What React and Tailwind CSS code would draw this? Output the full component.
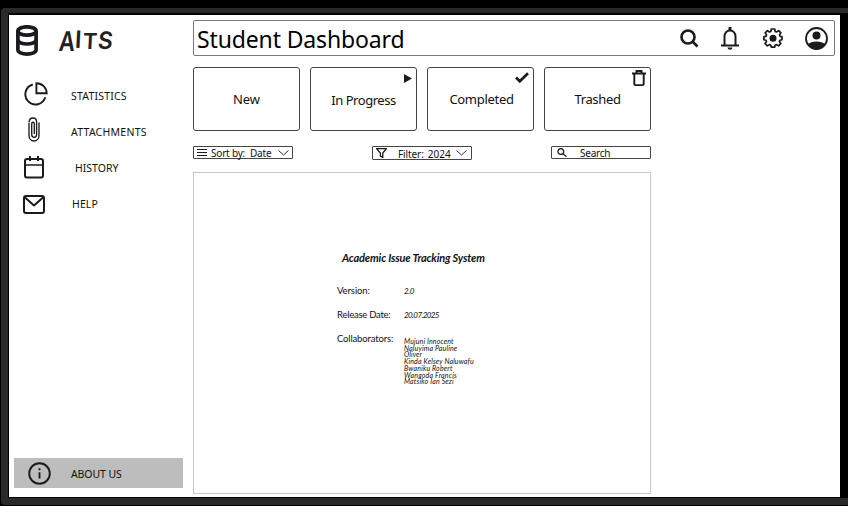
import React from "react";

const ui = "font-['Noto_Sans','Open_Sans',sans-serif]";
const script = "font-['Lato',sans-serif] italic";

function Icon({ className, box = "0 0 24 24", children, sw = 2 }) {
  return (
    <svg
      className={`block shrink-0 ${className}`}
      viewBox={box}
      fill="none"
      stroke="#1b1b1f"
      strokeWidth={sw}
      strokeLinejoin="round"
      preserveAspectRatio="none"
    >
      {children}
    </svg>
  );
}

const Database = () => (
  <Icon className="h-[31px] w-[22px]" box="0 0 22 31" sw={3.7}>
    <ellipse cx="11" cy="6" rx="9.1" ry="4.200" />
    <path d="M1.900 6v18.800c0 2.500 4 4.300 9.100 4.300s9.100-1.800 9.100-4.300V6" />
    <path d="M1.900 15.500c1.600 2.500 5 3.500 9.100 3.500s7.500-1 9.100-3.500" />
  </Icon>
);

const Pie = () => (
  <Icon className="h-[24px] w-[24px]" box="0 0 24 24" sw={1.9}>
    <path d="M8.800 2.500A10.200 10.200 0 1 0 21.300 15.300" />
    <path d="M12.400 1.200V11.300H22.700C22.700 5.600 18 1.200 12.400 1.200Z" strokeLinejoin="miter" />
  </Icon>
);

const Clip = () => (
  <Icon className="h-[25px] w-[12px]" box="0 0 12 25" sw={1.35}>
    <path d="M1 6v12.500c0 3 2 5.500 5 5.500s5-2.500 5-5.500V5.500M8.600 18V5C8.600 2.500 7.200 1 5 1S1.100 2.800 1.100 5.500M8.600 5.500v12c0 1.800-1 2.800-2.400 2.800s-2.500-1-2.500-2.800V7c0-1.200.5-1.800 1.300-1.800s1.300.6 1.300 1.800v10" />
  </Icon>
);

const Calendar = () => (
  <Icon className="h-[24px] w-[20px]" box="0 0 20 24" sw={2}>
    <rect x="1" y="4" width="18" height="18.500" rx="2" />
    <path d="M1 10h18" strokeWidth="1.500" />
    <path d="M6 1v5M14 1v5" />
  </Icon>
);

const Mail = () => (
  <Icon className="h-[19px] w-[22px]" box="0 0 22 19" sw={2}>
    <rect x="1" y="1" width="20" height="17" rx="2" />
    <path d="m2 2.500 9 8 9-8" />
  </Icon>
);

const Info = () => (
  <Icon className="h-[23px] w-[23px]" box="0 0 23 23" sw={1.9}>
    <circle cx="11.500" cy="11.500" r="10.300" />
    <path d="M11.500 10.300v6.200M11.500 6.300v2" />
  </Icon>
);

const Magnifier = () => (
  <Icon className="h-[19px] w-[19px]" box="0 0 19 19" sw={2.6}>
    <circle cx="8" cy="8" r="6.500" />
    <path d="m12.500 12.500 5 5" />
  </Icon>
);

const Bell = () => (
  <Icon className="h-[23px] w-[18px]" box="0 0 18 23" sw={2}>
    <path d="M3.500 18.500V9.500C3.500 6 6 3.500 9 3.500s5.500 2.500 5.500 6v9M0 18.600h18" />
    <path d="M9 0v3.500" strokeWidth="3" />
    <path d="M6.500 20.500h5c-.3 1.500-1.300 2.200-2.500 2.200s-2.200-.7-2.500-2.200Z" fill="#1b1b1f" stroke="none" />
  </Icon>
);

const Gear = () => (
  <Icon className="h-[20px] w-[20px]" box="0 0 20 20" sw={1.7}>
    <path d="M8.300 1h3.400l.5 2.500 1.300.5 2.200-1.400 2.200 2.200L16.500 7l.5 1.300 2 .4v3l-2 .5-.6 1.400 1.400 2-2.300 2.300-2-1.300-1.400.6-.4 1.900H8.300l-.5-1.900-1.400-.6-2 1.300-2.300-2.300 1.400-2-.6-1.400-2-.5v-3l2.100-.4.6-1.400-1.400-2L4.400 2.600l2 1.400 1.400-.5Z" />
    <circle cx="10" cy="10.300" r="3.500" fill="#1b1b1f" stroke="none" />
  </Icon>
);

const User = () => (
  <Icon className="h-[23px] w-[23px]" box="0 0 23 23" sw={1.8}>
    <circle cx="11.500" cy="11.500" r="10.500" />
    <circle cx="11.500" cy="8.500" r="4" fill="#1b1b1f" stroke="none" />
    <path d="M2.500 17.500c2-2 5.500-3 9-3s7 1 9 3c-2 3.300-5 5-9 5s-7-1.700-9-5Z" fill="#1b1b1f" stroke="none" />
  </Icon>
);

const Chevron = () => (
  <Icon className="h-[6px] w-[11px]" box="0 0 11 6" sw={0.9}>
    <path d="m.5.5 5 4.500 5-4.500" />
  </Icon>
);

function NavItem({ icon, label, pad, textClass }) {
  return (
    <div className="flex h-9 items-center">
      <div className={`flex w-[62px] shrink-0 ${pad}`}>{icon}</div>
      <span className={`whitespace-nowrap text-[10.5px] leading-none ${textClass}`}>{label}</span>
    </div>
  );
}

function Card({ label, textClass, icon }) {
  return (
    <div className="relative flex h-16 w-[107px] items-center justify-center rounded-[3px] border border-[#444]">
      <span className={`whitespace-nowrap text-[13px] leading-none ${textClass}`}>{label}</span>
      {icon}
    </div>
  );
}

const people = [
  ["Mujuni Innocent", "tracking-[0.15px]"],
  ["Naluyima Pauline", "tracking-[0.17px]"],
  ["Oliver", "tracking-[0.1px]"],
  ["Kinda Kelsey Naluwafu", "tracking-[0.15px]"],
  ["Bwaniku Robert", "tracking-[0.17px]"],
  ["Wangoda Francis", "tracking-[0.2px]"],
  ["Matsiko Ian Sezi", "tracking-[0.18px]"],
];

export default function App() {
  return (
    <div className={`h-[506px] w-[848px] overflow-hidden bg-black pt-2 text-[#111] ${ui}`}>
      <div className="ml-px h-[497px] rounded-l-[4px] bg-[#2a2a2a] pt-[5px] pb-[7px] pl-[7px]">
        <div className="h-full bg-black pt-[2px] pr-2 pb-px pl-px">
          <div className="flex h-full bg-white">
            <aside className="flex h-full w-[184px] shrink-0 flex-col">
              <div className="flex h-[62px] items-start pt-[10px] pl-[7px]">
                <Database />
                <div className="mt-[3px] ml-[21px] flex items-start font-['Inter',sans-serif] leading-none font-semibold text-[#222]">
                  <span className="inline-block w-[16px] origin-left scale-x-[0.82] -skew-x-6 text-[27px]">A</span>
                  <span className="inline-block w-[8px] rotate-3 text-[24px]">I</span>
                  <span className="mt-[2px] inline-block w-[15px] -skew-x-3 text-[22px]">T</span>
                  <span className="mt-px inline-block w-[15px] origin-left scale-x-[0.95] -skew-x-6 text-[24px]">S</span>
                </div>
              </div>
              <nav className="flex flex-col">
                <NavItem icon={<Pie />} label="STATISTICS" pad="pl-[15px] -mt-[2px]" textClass="pt-[3px] tracking-[0.2px]" />
                <NavItem icon={<Clip />} label="ATTACHMENTS" pad="pl-[19px] -mt-[3px]" textClass="pt-[2px] tracking-[0.25px]" />
                <NavItem icon={<Calendar />} label="HISTORY" pad="pl-[15px] -mt-px" textClass="pl-[4px] pt-[2px] tracking-[0px]" />
                <NavItem icon={<Mail />} label="HELP" pad="pl-[14px] pt-[3px]" textClass="pl-[1px] pt-[2px] tracking-[0.1px]" />
              </nav>
              <div className="mt-auto mb-[9px] ml-[5px] flex h-[30px] w-[169px] items-center bg-[#bdbdbd]">
                <div className="w-[57px] shrink-0 pl-[14px]"><Info /></div>
                <span className="pt-[2px] text-[10.5px] leading-none tracking-[-0.1px]">ABOUT US</span>
              </div>
            </aside>

            <main className="flex flex-1 flex-col pt-[5px]">
              <header className="flex h-9 w-[642px] items-center rounded-[2px] border border-[#777] pl-[3px]">
                <h1 className="pt-[3px] text-[23px] leading-none tracking-[-0.14px] text-black">Student Dashboard</h1>
                <div className="ml-auto flex items-center pr-[6px]">
                  <Magnifier />
                  <div className="ml-[22px]"><Bell /></div>
                  <div className="ml-[24px]"><Gear /></div>
                  <div className="ml-[22px]"><User /></div>
                </div>
              </header>

              <section className="mt-[11px] flex gap-[10px]">
                <Card label="New" textClass="tracking-[-0.1px]" />
                <Card
                  label="In Progress"
                  textClass="pt-[2px] tracking-[-0.45px]"
                  icon={
                    <svg className="absolute top-[6px] right-[4px] h-[9px] w-2" viewBox="0 0 8 9">
                      <path d="M0 0 8 4.500 0 9Z" fill="#1b1b1f" />
                    </svg>
                  }
                />
                <Card
                  label="Completed"
                  textClass="pl-[2px] tracking-[-0.3px]"
                  icon={
                    <svg className="absolute top-[4px] right-[4px] h-[11px] w-[14px]" viewBox="0 0 14 11">
                      <path d="m1 5.500 3.800 3.800L13 1.200" fill="none" stroke="#1b1b1f" strokeWidth="2.700" />
                    </svg>
                  }
                />
                <Card
                  label="Trashed"
                  textClass="pt-px tracking-[-0.35px]"
                  icon={
                    <svg className="absolute top-[2px] right-[4px] h-4 w-[14px]" viewBox="0 0 14 16" fill="none" stroke="#1b1b1f" strokeWidth="1.900">
                      <path d="M0 3.500h14M4.500 3V1h5v2M2.300 3.500V14c0 .7.400 1.100 1.200 1.100h7c.8 0 1.200-.4 1.200-1.100V3.500" />
                    </svg>
                  }
                />
              </section>

              <section className="mt-[15px] flex h-[14px] w-[458px] items-start justify-between text-[10px] leading-none whitespace-nowrap">
                <div className="flex h-[13px] w-[100px] items-center rounded-[1px] border border-[#444] pl-[3px]">
                  <Icon className="h-[7px] w-[10px]" box="0 0 10 7" sw={1}>
                    <path d="M0 .5h10M0 3.500h10M0 6.500h10" />
                  </Icon>
                  <span className="ml-1 pt-px tracking-[-0.2px]">Sort by:</span>
                  <span className="ml-[5px] pt-px tracking-[-0.2px]">Date</span>
                  <div className="mr-[3px] ml-auto"><Chevron /></div>
                </div>
                <div className="flex h-[14px] w-[100px] items-center rounded-[1px] border border-[#444] pl-[3px]">
                  <Icon className="h-[10px] w-[11px]" box="0 0 11 10" sw={1.3}>
                    <path d="M.6.600h9.800L6.800 5v4.400L4.400 8.200V5Z" />
                  </Icon>
                  <span className="ml-[11px] pt-[2px] tracking-[-0.1px]">Filter:</span>
                  <span className="ml-[4px] pt-[2px]">2024</span>
                  <div className="mr-[4px] ml-auto"><Chevron /></div>
                </div>
                <div className="flex h-[13px] w-[100px] items-center rounded-[1px] border border-[#444] pl-[5px]">
                  <Icon className="h-[9px] w-[10px]" box="0 0 10 9" sw={1.3}>
                    <circle cx="3.800" cy="3.500" r="2.900" />
                    <path d="m6 5.700 3.500 3" />
                  </Icon>
                  <span className="ml-[13px] pt-px tracking-[-0.25px]">Search</span>
                </div>
              </section>

              <section className="mt-3 h-[322px] w-[458px] border border-[#c8c8c8]">
                <h2 className={`mt-[79px] ml-[148px] text-[11px] leading-[12px] font-bold tracking-[-0.17px] whitespace-nowrap text-[#111] ${script}`}>
                  Academic Issue Tracking System
                </h2>
                <dl className="mt-[21px] ml-[143px] grid grid-cols-[67px_1fr] grid-rows-[24px_24px_60px] font-['Lato',sans-serif] text-[9.500px] leading-3">
                  <dt className="tracking-[-0.1px]">Version:</dt>
                  <dd className={`text-[8px] tracking-[-0.4px] ${script}`}>2.0</dd>
                  <dt className="tracking-[-0.25px]">Release Date:</dt>
                  <dd className={`text-[8px] tracking-[-0.6px] ${script}`}>20.07.2025</dd>
                  <dt className="tracking-[-0.15px]">Collaborators:</dt>
                  <dd className={`pt-[5px] text-[7px] leading-[6.700px] ${script}`}>
                    {people.map(([name, track]) => (
                      <div key={name} className={`whitespace-nowrap ${track}`}>{name}</div>
                    ))}
                  </dd>
                </dl>
              </section>
            </main>
          </div>
        </div>
      </div>
    </div>
  );
}
